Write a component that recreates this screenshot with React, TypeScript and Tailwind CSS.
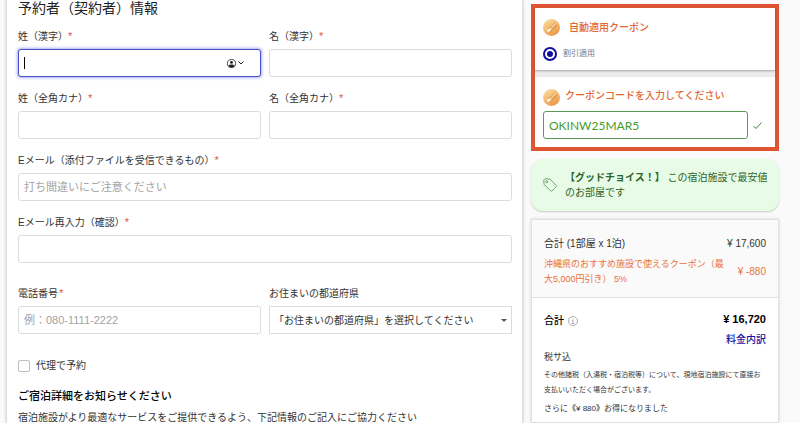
import { ReactNode, useState } from "react";
import { clsx } from "clsx";

type FieldProps = {
  id: string;
  label: string;
  type?: string;
  required?: boolean;
  placeholder?: string;
};

const Required = ({ spaced = false }: { spaced?: boolean }) => (
  <span className={clsx("text-[11px] leading-none text-[#d9534f]", spaced && "ml-px")}>*</span>
);

const Field = ({ id, label, type = "text", required = true, placeholder }: FieldProps) => (
  <div className="flex min-w-0 flex-col gap-1">
    <label htmlFor={id} className="text-[10px] leading-4">
      {label}
      {required && <Required spaced={type === "tel"} />}
    </label>
    <input
      id={id}
      type={type}
      placeholder={placeholder}
      className="h-7 w-full rounded-[3px] border border-[#dcdcdc] bg-white px-[5px] text-[11px] placeholder:text-[#a3a3a3]"
    />
  </div>
);

const AccountIcon = () => (
  <svg viewBox="0 0 20 20" className="size-[9px]" aria-hidden="true">
    <circle cx="10" cy="10" r="9" fill="none" stroke="#222" strokeWidth="1.8" />
    <circle cx="10" cy="7.6" r="3.2" fill="#222" />
    <path d="M3 15c1.5-2.2 3.8-2.8 7-2.8s5.5.6 7 2.8A9 9 0 0 1 10 19a9 9 0 0 1-7-4z" fill="#222" />
  </svg>
);

const CouponIcon = ({ className }: { className?: string }) => (
  <svg viewBox="0 0 34 34" className={clsx("size-[17px] shrink-0", className)} aria-hidden="true">
    <defs>
      <linearGradient id="coin" x1="0" y1="0" x2="0.6" y2="1">
        <stop offset="0" stopColor="#fbdfa6" />
        <stop offset="0.5" stopColor="#f5c079" />
        <stop offset="1" stopColor="#ea9b48" />
      </linearGradient>
    </defs>
    <circle cx="17" cy="17" r="17" fill="url(#coin)" />
    <path d="M7 23 23 7l6 6-15 15z" fill="#dd8b41" opacity="0.6" />
    <path d="M8 24c-.5-2.5.5-4 2.500-4l1.500.5 3-3 2.500 2.500-3 3c0 3-4 4-6.500 1z" fill="#fff4dc" />
    <path d="m16.500 16.500 8-8 1.500 1.500-8 8z" fill="#fbe3b8" />
  </svg>
);

const TagIcon = () => (
  <svg viewBox="0 0 28 28" className="size-3.5 shrink-0" fill="none" stroke="#5c8f58" strokeWidth="1.6" strokeLinejoin="round" aria-hidden="true">
    <path d="M1.500 4 4 1.500l10 .5 12.500 13.200a1.500 1.500 0 0 1 0 2L18 26a1.500 1.500 0 0 1-2 0L2 13z" />
    <circle cx="7.500" cy="7.500" r="2.200" />
  </svg>
);

const CouponTitle = ({ children }: { children: ReactNode }) => (
  <span className="block text-[10px] leading-4 font-medium text-[#e2662f]">{children}</span>
);

const ReservationForm = () => (
  <main className="min-w-0 flex-1 border-x border-[#dedede] bg-white pr-2.5 pl-[11px] shadow-[0_0_3px_rgba(0,0,0,0.2)]">
    <h1 className="text-[14px] leading-4 text-[#222]">予約者（契約者）情報</h1>
    <form className="mt-[13px] flex flex-col">
      <div className="grid grid-cols-2 gap-x-2 gap-y-3.5">
        <div className="flex min-w-0 flex-col gap-1">
          <label htmlFor="lastName" className="text-[10px] leading-4">
            姓（漢字）
            <Required />
          </label>
          <div className="flex h-7 items-center rounded-[3px] border border-[#4a4fc4] bg-white pr-4 pl-[5px] shadow-[0_0_3px_1px_#a9adf5]">
            <span className="h-3 w-px bg-black" />
            <input id="lastName" type="text" className="min-w-0 flex-1 text-[11px] outline-none" />
            <button type="button" aria-label="連絡先を自動入力" className="flex items-center gap-0.5">
              <AccountIcon />
              <svg viewBox="0 0 12 8" className="h-1 w-1.5" fill="none" stroke="#222" strokeWidth="2" aria-hidden="true">
                <path d="m1 1 5 5 5-5" />
              </svg>
            </button>
          </div>
        </div>
        <Field id="firstName" label="名（漢字）" />
        <Field id="lastKana" label="姓（全角カナ）" />
        <Field id="firstKana" label="名（全角カナ）" />
        <div className="col-span-2">
          <Field id="email" type="email" label="Eメール（添付ファイルを受信できるもの）" placeholder="打ち間違いにご注意ください" />
        </div>
        <div className="col-span-2">
          <Field id="emailConfirm" type="email" label="Eメール再入力（確認）" />
        </div>
      </div>

      <div className="mt-[23px] grid grid-cols-2 gap-x-2">
        <Field id="phone" type="tel" label="電話番号" placeholder="例：080-1111-2222" />
        <div className="flex min-w-0 flex-col gap-1">
          <label htmlFor="prefecture" className="text-[10px] leading-4">
            お住まいの都道府県
          </label>
          <div className="grid items-center border border-[#dcdcdc]">
            <select id="prefecture" className="col-start-1 row-start-1 h-[26px] w-full appearance-none bg-white pr-4 pl-1 text-[10px]">
              <option>「お住まいの都道府県」を選択してください</option>
            </select>
            <svg viewBox="0 0 12 6" className="pointer-events-none col-start-1 row-start-1 mr-1 h-[3px] w-1.5 justify-self-end" aria-hidden="true">
              <path d="M0 0h12L6 6z" fill="#555" />
            </svg>
          </div>
        </div>
      </div>

      <label className="mt-6 flex items-center gap-1.5 text-[10px] leading-4">
        <input type="checkbox" className="size-3 appearance-none rounded-[2px] border border-[#bdbdbd] bg-white" />
        代理で予約
      </label>

      <h2 className="mt-3.5 text-[11px] leading-4 font-medium text-black">ご宿泊詳細をお知らせください</h2>
      <p className="mt-1.5 text-[10px] leading-4">
        宿泊施設がより最適なサービスをご提供できるよう、下記情報のご記入にご協力ください
      </p>
    </form>
  </main>
);

const Coupons = () => {
  const [code, setCode] = useState("OKINW25MAR5");

  return (
    <section className="border-4 border-[#df5533] bg-[#ebebeb]">
      <div className="bg-white px-2 pt-[11px] pb-2 shadow-[0_1px_2px_rgba(0,0,0,0.3)]">
        <div className="flex items-center gap-[9px]">
          <CouponIcon />
          <CouponTitle>自動適用クーポン</CouponTitle>
        </div>
        <label className="mt-2.5 flex items-center gap-1.5 text-[8px] leading-4 text-[#6f7588]">
          <input
            type="radio"
            name="coupon"
            defaultChecked
            className="size-3.5 appearance-none rounded-full border-2 border-[#10109c] bg-white checked:bg-[#10109c] checked:bg-clip-content checked:p-[2px]"
          />
          割引適用
        </label>
      </div>
      <div className="mt-[7px] bg-white px-2 pt-[11px] pb-2">
        <div className="flex items-start gap-[5px]">
          <CouponIcon className="mt-px" />
          <label htmlFor="couponCode">
            <CouponTitle>クーポンコードを入力してください</CouponTitle>
          </label>
        </div>
        <div className="mt-[5px] flex items-center gap-[5px]">
          <input
            id="couponCode"
            value={code}
            onChange={(e) => setCode(e.target.value)}
            className="h-7 w-[205px] min-w-0 rounded-[3px] border border-[#5b9a55] bg-white px-[5px] font-[Lato,sans-serif] text-[12px] text-[#459a2c]"
          />
          <svg viewBox="0 0 18 14" className="h-[7px] w-[9px]" fill="none" stroke="#3f7f3a" strokeWidth="2" aria-hidden="true">
            <path d="m1 8 5 5L17 1" />
          </svg>
        </div>
      </div>
    </section>
  );
};

const BestPrice = () => (
  <section className="mt-2 flex items-center gap-2 rounded-xl bg-[#e8fbe6] py-[11px] pr-2 pl-3 shadow-[0_1px_2px_rgba(0,0,0,0.2)]">
    <TagIcon />
    <p className="text-[10px] leading-[15px] text-[#2b6427]">
      <strong className="font-bold">【グッドチョイス！】</strong> この宿泊施設で最安値のお部屋です
    </p>
  </section>
);

const PriceSummary = () => (
  <section className="mt-2 flex-1 border border-[#e0e0e0] bg-white shadow-[0_0_3px_rgba(0,0,0,0.15)]">
    <div className="border-b border-[#e0e0e0] bg-[#fafafa] px-3 pt-4 pb-2.5 text-[10px] leading-4">
      <div className="flex justify-between">
        <span>合計 (1部屋 x 1泊)</span>
        <span>¥ 17,600</span>
      </div>
      <div className="mt-[5px] flex items-center justify-between text-[#e8733c]">
        <span className="w-[184px] text-[9px] leading-[15px]">
          沖縄県のおすすめ施設で使えるクーポン（最大5,000円引き） 5%
        </span>
        <span>¥ -880</span>
      </div>
    </div>
    <div className="px-3 pt-[13px]">
      <div className="flex items-start justify-between">
        <span className="flex items-center gap-1 pt-0.5 text-[10px] leading-4 font-medium text-black">
          合計
          <svg viewBox="0 0 20 20" className="size-2.5" fill="none" stroke="#999" strokeWidth="1.6" aria-hidden="true">
            <circle cx="10" cy="10" r="9" />
            <path d="M8 9h2v6M7.500 15h5M10 5v2" />
          </svg>
        </span>
        <span className="text-[11px] leading-4 font-bold text-black">¥ 16,720</span>
      </div>
      <a href="#breakdown" className="mt-[3px] ml-auto block w-fit text-[10px] leading-4 font-medium text-[#1414a0]">
        料金内訳
      </a>
      <p className="mt-px text-[9px] leading-4">税サ込</p>
      <p className="mt-0.5 text-[7px] leading-[15px]">
        その他諸税（入湯税・宿泊税等）について、現地宿泊施設にて直接お支払いいただく場合がございます。
      </p>
      <p className="mt-1 text-[8px] leading-4">
        さらに<strong className="font-medium">《¥ 880》</strong>お得になりました
      </p>
    </div>
  </section>
);

export default function App() {
  return (
    <div
      lang="ja"
      className="flex h-screen gap-2 overflow-hidden bg-[#fafafa] pr-[21px] pl-1.5 font-['Liberation_Sans','Noto_Sans_CJK_JP',sans-serif] text-[#333]"
    >
      <ReservationForm />
      <aside className="flex w-[248px] shrink-0 flex-col pt-1">
        <Coupons />
        <BestPrice />
        <PriceSummary />
      </aside>
    </div>
  );
}
